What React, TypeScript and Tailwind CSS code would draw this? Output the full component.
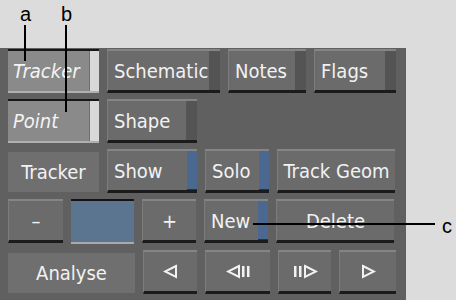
import type { ReactNode } from "react";

const font = "font-['DejaVu_Sans_Condensed','DejaVu_Sans',sans-serif] [font-stretch:condensed]";

type BtnProps = {
  w: string;
  children?: ReactNode;
  strip?: "dark" | "blue";
  align?: "left" | "center";
};

const Btn = ({ w, children, strip, align = "left" }: BtnProps) => (
  <div
    className={`${w} h-[44px] flex bg-[#6b6b6b] border-t-2 border-t-[#858585] border-l border-l-[#7c7c7c] border-b-[3px] border-b-[#1b1b1b] text-[#f2f2f2] text-[20px] ${font}`}
  >
    <div
      className={`flex-1 flex items-center ${align === "center" ? "justify-center" : "pl-[6px]"}`}
    >
      {children}
    </div>
    {strip === "dark" && <div className="w-[11px] bg-[#545454]" />}
    {strip === "blue" && (
      <div className="w-[10px] bg-[#4b6891] border-b border-b-[#22305a]" />
    )}
  </div>
);

const Toggle = ({ label }: { label: string }) => (
  <div
    className={`w-[91px] h-[44px] flex bg-[#8a8a8a] border-t-2 border-t-[#161616] border-b-2 border-b-[#b0b0b0] text-[#f4f4f4] text-[20px] italic ${font}`}
  >
    <div className="flex-1 flex items-center pl-[5px]">{label}</div>
    <div className="w-[10px] bg-[#d8d8d8] border-l border-l-[#6e6e6e]" />
  </div>
);

const Label = ({ w, children }: { w: string; children: ReactNode }) => (
  <div
    className={`${w} h-[40px] mt-[3px] flex items-center justify-center bg-[#6f6f6f] text-[#f2f2f2] text-[20px] ${font}`}
  >
    {children}
  </div>
);

const Tri = ({ dir }: { dir: "l" | "r" }) => (
  <svg width="15" height="15" viewBox="0 0 15 15">
    <polygon
      points={dir === "l" ? "13,2 2,7.5 13,13" : "2,2 13,7.5 2,13"}
      fill="none"
      stroke="#f2f2f2"
      strokeWidth="2"
    />
  </svg>
);

const Bars = () => (
  <svg width="10" height="15" viewBox="0 0 10 15">
    <rect x="1" y="2" width="2.5" height="11" fill="#f2f2f2" />
    <rect x="6" y="2" width="2.5" height="11" fill="#f2f2f2" />
  </svg>
);

export default function App() {
  return (
    <div className="relative w-[456px] h-[300px] bg-[#dcdcdc] pt-[48px] overflow-hidden">
      <div className="w-[406px] h-[252px] bg-[#606060] pt-px pl-2 flex flex-col gap-[6px]">
        <div className="flex gap-2">
          <Toggle label="Tracker" />
          <Btn w="w-[113px]" strip="dark">Schematic</Btn>
          <Btn w="w-[78px]" strip="dark">Notes</Btn>
          <Btn w="w-[82px]" strip="dark">Flags</Btn>
        </div>
        <div className="flex gap-2">
          <Toggle label="Point" />
          <Btn w="w-[90px]" strip="dark">Shape</Btn>
        </div>
        <div className="flex gap-2">
          <Label w="w-[91px]">Tracker</Label>
          <Btn w="w-[90px]" strip="blue">Show</Btn>
          <Btn w="w-[64px]" strip="blue">Solo</Btn>
          <Btn w="w-[118px]" align="center">Track Geom</Btn>
        </div>
        <div className="flex gap-2">
          <Btn w="w-[55px]" align="center">–</Btn>
          <div className="w-[63px] h-[45px] bg-[#5b7591] border-t-2 border-t-[#141414] border-b-2 border-b-[#a9a9a9]" />
          <Btn w="w-[54px]" align="center">+</Btn>
          <Btn w="w-[64px]" strip="blue">New</Btn>
          <Btn w="w-[118px]" align="center">Delete</Btn>
        </div>
        <div className="flex gap-2">
          <Label w="w-[127px]">Analyse</Label>
          <Btn w="w-[54px]" align="center">
            <Tri dir="l" />
          </Btn>
          <Btn w="w-[65px]" align="center">
            <Tri dir="l" />
            <Bars />
          </Btn>
          <Btn w="w-[53px]" align="center">
            <Bars />
            <Tri dir="r" />
          </Btn>
          <Btn w="w-[57px]" align="center">
            <Tri dir="r" />
          </Btn>
        </div>
      </div>

      <div className="absolute inset-0 pointer-events-none font-['Liberation_Sans',Arial,sans-serif] text-[20px] text-black">
        <span className="absolute left-[20px] top-[-1px]">a</span>
        <div className="absolute left-[24px] top-[25px] w-[2px] h-[36px] bg-black" />
        <span className="absolute left-[61px] top-[-1px]">b</span>
        <div className="absolute left-[65px] top-[25px] w-[2px] h-[87px] bg-black" />
        <div className="absolute left-[253px] top-[223px] w-[182px] h-[2px] bg-black" />
        <span className="absolute left-[442px] top-[211px]">c</span>
      </div>
    </div>
  );
}
